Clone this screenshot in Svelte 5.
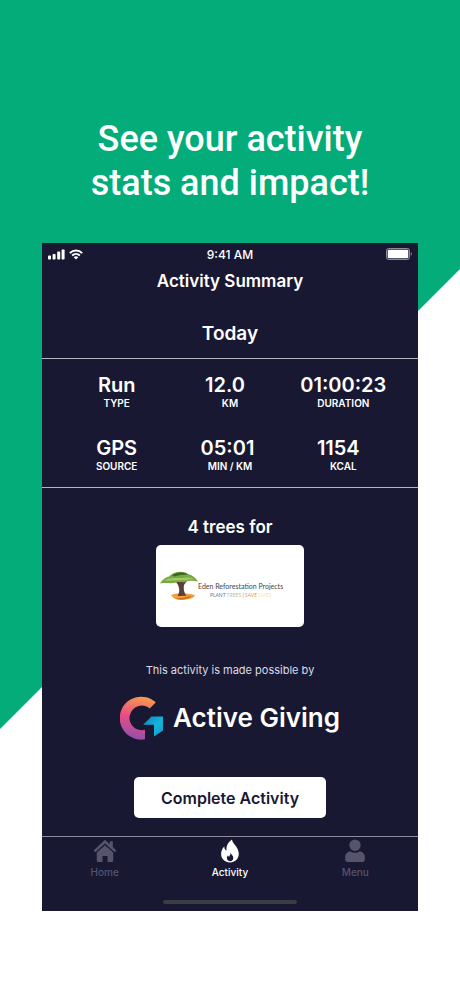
<!-- Store listing slide: headline above the activity summary screen. -->
<script lang="ts">
  type Stat = { value: string; label: string };
  type Tab = { id: string; label: string };

  const stats: Stat[] = [
    { value: "Run", label: "TYPE" },
    { value: "12.0  ", label: "KM" },
    { value: "01:00:23", label: "DURATION" },
    { value: "GPS", label: "SOURCE" },
    { value: "05:01 ", label: "MIN / KM" },
    { value: "1154  ", label: "KCAL" },
  ];

  const tabs: Tab[] = [
    { id: "home", label: "Home" },
    { id: "activity", label: "Activity" },
    { id: "menu", label: "Menu" },
  ];

  let current = $state("activity");
</script>

<main class="slide">
  <h1 class="headline">See your activity<br />stats and impact!</h1>

  <div class="phone">
    <div class="status">
      <div class="signal">
        <svg width="17" height="11" viewBox="0 0 17 11" fill="#fff" aria-hidden="true">
          <rect x="0" y="6.5" width="3" height="4" rx="0.8" />
          <rect x="4.6" y="5" width="3" height="5.5" rx="0.8" />
          <rect x="9.2" y="2.6" width="3" height="7.9" rx="0.8" />
          <rect x="13.6" y="0.4" width="3" height="10.1" rx="0.8" />
        </svg>
        <svg width="14" height="11" viewBox="0 0 14 11" fill="none" stroke="#fff" aria-hidden="true">
          <path d="M0.8 4.1a9 9 0 0 1 12.4 0" stroke-width="2" />
          <path d="M3.1 6.5a5.7 5.7 0 0 1 7.8 0" stroke-width="1.9" />
          <path d="M7 10.5 4.7 8.3a3 3 0 0 1 4.6 0z" fill="#fff" stroke="none" />
        </svg>
      </div>
      <span class="clock">9:41 AM</span>
      <svg class="battery" width="26" height="12" viewBox="0 0 26 12" aria-hidden="true">
        <rect x="0.5" y="0.5" width="23" height="11" rx="2" fill="none" stroke="#8d8c9c" />
        <rect x="1.7" y="1.7" width="20.6" height="8.6" rx="0.8" fill="#fff" />
        <path d="M24.8 4.2v3.6a2 2 0 0 0 0-3.6z" fill="#8d8c9c" />
      </svg>
    </div>

    <h2 class="title">Activity Summary</h2>
    <h3 class="day">Today</h3>

    <dl class="stats">
      {#each stats as stat}
        <div class="stat">
          <dt>{stat.label}</dt>
          <dd>{stat.value}</dd>
        </div>
      {/each}
    </dl>

    <section class="impact">
      <p class="trees">4 trees for</p>
      <div class="card">
        <svg width="38" height="32" viewBox="0 0 38 32" aria-hidden="true">
          <path d="M11 25c6-2.500 16-2 24 .2-1 3-5 3.800-9 4.300-5 1.200-12 .6-15-4.500z" fill="#f0a13c" />
          <path d="M15 28c5 .8 11-.8 17-2.200-3 3.500-13 5-17 2.200z" fill="#c96f1d" />
          <path d="M14 9l6 3 4-3 5-1-5 7c-.8 4 .2 8 2.500 11-3-.8-6 .4-9-.2 2.500-3 2-7.500 .5-10.800z" fill="#5b4038" />
          <path d="M0 13.500C2 9.500 6 7 9 6.500 13 2 22 0 28 4c4 1 8 4 10 7.500-4-1-7-.6-10-.4-4 2-7 1.100-9 .7-6 2.500-12 .5-19 1.700z" fill="#76a944" />
          <path d="M12 5.500C16 2 24 1.500 28 4.500c-5 .2-11 .8-13 2-1.500-.2-2-.5-3-1z" fill="#3f6425" />
          <path d="M4 10.500c5-3 12-2.500 19-2.500 4-.8 8-.5 11 1-5 .2-8 1.500-11 1.300-6-.6-12 .8-19 .2z" fill="#a3c966" />
        </svg>
        <div class="eden">
          <span class="eden-name">Eden Reforestation Projects</span>
          <span class="eden-tag">PLANT <i>TREES</i> | <b>SAVE</b> <em>LIVES</em></span>
        </div>
      </div>
      <p class="credit">This activity is made possible by</p>
      <div class="brand">
        <svg width="44" height="44" viewBox="0 0 44 44" aria-hidden="true">
          <defs>
            <linearGradient id="warm" x1="0.6" y1="0" x2="0.4" y2="1">
              <stop offset="0" stop-color="#f79a4e" />
              <stop offset="0.5" stop-color="#ea4c83" />
              <stop offset="1" stop-color="#8f4fae" />
            </linearGradient>
            <linearGradient id="cool" x1="0" y1="0" x2="1" y2="1">
              <stop offset="0" stop-color="#1182b8" />
              <stop offset="0.55" stop-color="#12b5dc" />
              <stop offset="1" stop-color="#1a96c4" />
            </linearGradient>
          </defs>
          <path d="M35.800 6.300A21.500 21.500 0 1 0 25 43.300V33.800A12.300 12.300 0 1 1 29.800 12.600z" fill="url(#warm)" />
          <path d="M31.500 20.500H43V34.500L34 40.500V28.800H23.200z" fill="url(#cool)" />
        </svg>
        <span>Active Giving</span>
      </div>
      <button class="complete">Complete Activity</button>
    </section>

    <nav class="tabs">
      {#each tabs as tab}
        <button class="tab" class:active={current === tab.id} onclick={() => (current = tab.id)}>
          <svg width="24" height="24" viewBox="0 0 24 24" fill="currentColor" aria-hidden="true">
            {#if tab.id === "home"}
              <path d="M12 .8 .6 11.400l1.700 1.900L12 4.500l9.700 8.800 1.700-1.900-3.600-3.400V2.200h-3v3z" />
              <path d="M12 6.200 3.800 13.600V21.500q0 1.500 1.500 1.500H9.500V17h5v6h4.200q1.500 0 1.500-1.500V13.600z" />
            {:else if tab.id === "activity"}
              <path fill-rule="evenodd" d="M14 .5c.5 4.500 6.800 7.500 6.800 14.300 0 5-3.800 8.700-8.800 8.700s-8.900-3.600-8.900-8.500c0-3 1.200-5.500 3.200-7.500 0 2 .7 3.500 2.200 4.100C8 6.500 10.500 3 14 .5zM12.600 13.600c.3 2.300-1.100 2.900-1.500 4.200-.8-.3-1-.9-1-1.600-1 1-1.300 2-1.200 3.100.2 1.700 1.500 2.900 3.200 2.900 1.900 0 3.200-1.300 3.200-3.200 0-2.400-2.100-3.200-2.700-5.400z" />
            {:else}
              <circle cx="12" cy="6.200" r="5.700" />
              <path d="M7 12.200q5 3.200 10 0c3 .6 4.800 2.600 4.800 5.500v2.800q0 2.500-2.500 2.500H4.700q-2.500 0-2.500-2.500v-2.800c0-2.900 1.800-4.900 4.800-5.500z" />
            {/if}
          </svg>
          {tab.label}
        </button>
      {/each}
    </nav>
    <div class="indicator"></div>
  </div>
</main>

<style>
  :global(body) {
    margin: 0;
    background: #fff;
  }
  .slide {
    min-height: 100vh;
    box-sizing: border-box;
    padding: 117px 42px 84px;
    background: linear-gradient(135deg, #03ac78 515px, #fff 516px);
    font-family: Inter, "Liberation Sans", sans-serif;
    color: #fff;
  }
  h1,
  h2,
  h3,
  p,
  dl,
  dd {
    margin: 0;
  }
  .headline {
    margin-bottom: 38px;
    font-family: Roboto, sans-serif;
    font-size: 36px;
    font-weight: 500;
    line-height: 44px;
    text-align: center;
  }
  .phone {
    padding-bottom: 7px;
    background: #191832;
    text-align: center;
  }
  .status {
    display: grid;
    grid-template-columns: 1fr auto 1fr;
    align-items: center;
    height: 22px;
    padding: 0 6px;
  }
  .signal {
    display: flex;
    gap: 4px;
  }
  .clock {
    font-size: 12px;
    font-weight: 500;
  }
  .battery {
    justify-self: end;
  }
  .title {
    font-size: 17px;
    font-weight: 600;
    line-height: 32px;
  }
  .day {
    padding: 24px 0 11px;
    border-bottom: 1px solid #b5b4c4;
    font-size: 19px;
    font-weight: 600;
    line-height: 26px;
  }
  .stats {
    display: grid;
    grid-template-columns: repeat(3, 1fr);
    row-gap: 26px;
    padding: 14px 18px;
    border-bottom: 1px solid #b5b4c4;
  }
  .stat {
    display: flex;
    flex-direction: column-reverse;
  }
  .stat dd {
    font-size: 20px;
    font-weight: 600;
    line-height: 24px;
    white-space: pre;
  }
  .stat dt {
    font-size: 10px;
    font-weight: 600;
    line-height: 13px;
  }
  .impact {
    display: flex;
    flex-direction: column;
    align-items: center;
    padding: 27px 0 18px;
  }
  .trees {
    font-size: 17px;
    font-weight: 600;
    line-height: 24px;
  }
  .card {
    display: flex;
    align-items: center;
    box-sizing: border-box;
    width: 148px;
    height: 82px;
    margin: 6px 0 35px;
    padding: 0 4px;
    background: #fff;
    border-radius: 5px;
  }
  .eden {
    display: flex;
    flex-direction: column;
    align-items: center;
    padding-top: 8px;
    font-family: Lato, "Open Sans", sans-serif;
    white-space: nowrap;
  }
  .eden-name {
    font-size: 7px;
    line-height: 9px;
    color: #444;
  }
  .eden-tag {
    font-size: 5px;
    line-height: 8px;
    color: #777;
  }
  .eden-tag i,
  .eden-tag b,
  .eden-tag em {
    font-style: normal;
    font-weight: 400;
  }
  .eden-tag i {
    color: #b9c3a0;
  }
  .eden-tag b {
    color: #dd9a62;
  }
  .eden-tag em {
    color: #f6dfb4;
  }
  .credit {
    font-size: 11px;
    line-height: 16px;
    color: #dddce6;
  }
  .brand {
    display: flex;
    align-items: center;
    gap: 9px;
    margin: 18px 0 37px;
    font-size: 26px;
    font-weight: 600;
    line-height: 44px;
  }
  .complete {
    width: 192px;
    height: 41px;
    border: 0;
    border-radius: 5px;
    background: #fff;
    font: 600 16px Inter, sans-serif;
    color: #191832;
    cursor: pointer;
  }
  .tabs {
    display: grid;
    grid-template-columns: repeat(3, 1fr);
    border-top: 1px solid #8d8c9c;
  }
  .tab {
    display: flex;
    flex-direction: column;
    align-items: center;
    gap: 3px;
    padding: 2px 0 0;
    border: 0;
    background: none;
    font: 500 10px/12px Inter, sans-serif;
    color: #55546c;
    cursor: pointer;
  }
  .tab.active {
    color: #fff;
  }
  .indicator {
    width: 134px;
    height: 4px;
    margin: 22px auto 0;
    border-radius: 2px;
    background: #3c3c44;
  }
</style>
